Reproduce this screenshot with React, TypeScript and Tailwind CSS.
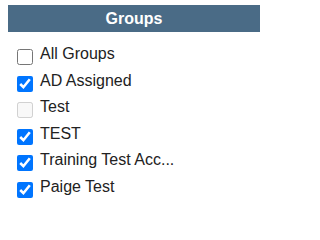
const groups = [
  { name: "All Groups", checked: false, disabled: false },
  { name: "AD Assigned", checked: true, disabled: false },
  { name: "Test", checked: false, disabled: true },
  { name: "TEST", checked: true, disabled: false },
  { name: "Training Test Acc...", checked: true, disabled: false },
  { name: "Paige Test", checked: true, disabled: false },
];

export default function App() {
  return (
    <div className="w-[268px] h-[202px] bg-white px-2 pt-[5px] font-['Liberation_Sans',Arial,sans-serif] overflow-hidden">
      <div className="flex h-[27px] items-center justify-center bg-[#4a6b86] text-[16px] font-bold text-white">
        Groups
      </div>

      <div className="mt-[12px] flex flex-col">
        {groups.map((g) => (
          <label key={g.name} className="flex h-[26.6px] items-start gap-[7px] pl-[9px]">
            <input
              type="checkbox"
              defaultChecked={g.checked}
              disabled={g.disabled}
              className="m-0 mt-[5px] h-4 w-4 shrink-0"
            />
            <span className="whitespace-nowrap text-[16px] leading-[20px] text-[#222]">{g.name}</span>
          </label>
        ))}
      </div>
    </div>
  );
}
